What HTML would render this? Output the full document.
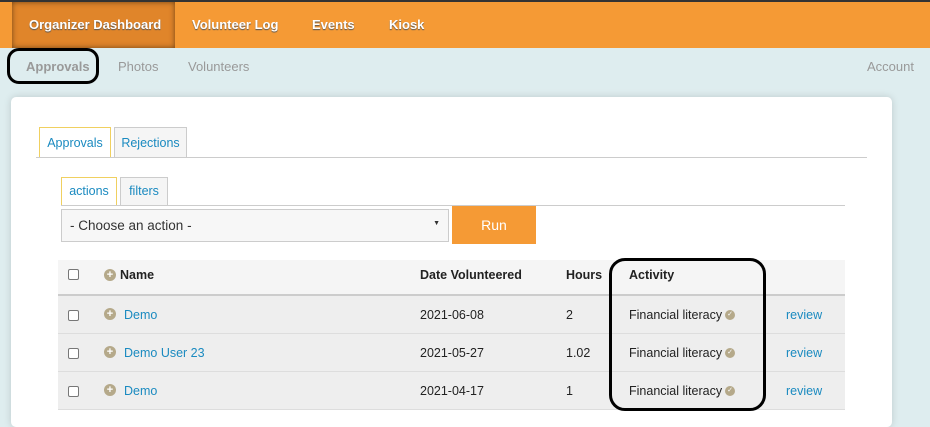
<!DOCTYPE html>
<html><head><style>
*{box-sizing:border-box;margin:0;padding:0}
body{width:930px;height:412px;overflow:hidden;background:#deedef;font-family:"Liberation Sans",sans-serif;position:relative}
.top{position:absolute;left:0;top:0;width:930px;height:48px;background:#f59a35;border-top:2px solid #333}
.top span{position:absolute;top:15px;color:#fff;font-weight:bold;font-size:13px;text-shadow:0 1px 1px #555}
.act{position:absolute;left:12px;top:0;width:163px;height:46px;background:#e0852a;box-shadow:inset 0 0 6px rgba(0,0,0,.5)}
.sub{position:absolute;top:59px;color:#999;font-size:13px}
.card{position:absolute;left:11px;top:97px;width:881px;height:330px;background:#fff;border-radius:5px;box-shadow:0 0 8px rgba(0,0,0,.15)}
.tab{position:absolute;border:1px solid #ccc;border-bottom:none;background:#f5f5f5;color:#1a8ac0;font-size:12.5px;text-align:center}
.tab.a{border-color:#f0d060;background:#fff}
.line{position:absolute;height:1px;background:#ccc}
.sel{position:absolute;left:61px;top:209px;width:388px;height:33px;border:1px solid #ccc;background:#f7f7f7;font-size:13.5px;color:#333;padding:8px 0 0 8px}
.run{position:absolute;left:452px;top:206px;width:84px;height:38px;background:#f59a35;color:#fff;font-size:14px;text-align:center;line-height:38px}
.row{position:absolute;left:58px;width:787px;height:38px;background:#eee;border-bottom:1px solid #ddd;font-size:12.5px;color:#222}
.row span{position:absolute;top:12px}
.cb{position:absolute;left:10px;top:14px;width:11px;height:11px;border:1px solid #777;border-radius:2px;background:#fff}
.pl{position:absolute;left:46px;top:12px;width:12px;height:12px;border-radius:50%;background:#b5a98a;color:#fff;font-size:11px;line-height:12px;text-align:center;font-weight:bold}
.ck{display:inline-block;width:10px;height:10px;border-radius:50%;background:#b5a98a;vertical-align:middle;margin:-2px 0 0 3px;color:#fff;font-size:7px;line-height:10px;text-align:center;font-style:normal;overflow:hidden}
.l{color:#1a8ac0}
.box{position:absolute;border:3px solid #000;border-radius:12px}
</style></head><body>
<div class="top"><div class="act"></div>
<span style="left:29px">Organizer Dashboard</span><span style="left:192px">Volunteer Log</span><span style="left:312px">Events</span><span style="left:389px">Kiosk</span></div>
<div class="sub" style="left:26px;font-weight:bold">Approvals</div>
<div class="sub" style="left:118px">Photos</div>
<div class="sub" style="left:188px">Volunteers</div>
<div class="sub" style="left:867px">Account</div>
<div class="box" style="left:7px;top:48px;width:92px;height:36px"></div>
<div class="card"></div>
<div class="tab a" style="left:39px;top:127px;width:72px;height:31px;line-height:30px">Approvals</div>
<div class="tab" style="left:114px;top:127px;width:73px;height:30px;line-height:30px">Rejections</div>
<div class="line" style="left:36px;top:157px;width:831px"></div>
<div class="tab a" style="left:61px;top:177px;width:56px;height:29px;line-height:27px">actions</div>
<div class="tab" style="left:120px;top:177px;width:48px;height:28px;line-height:27px">filters</div>
<div class="line" style="left:61px;top:205px;width:784px"></div>
<div class="sel">- Choose an action -<span style="position:absolute;right:8px;top:10px;font-size:7px">▼</span></div>
<div class="run">Run</div>
<div class="row" style="top:260px;height:36px;background:#f5f5f5;border-bottom:2px solid #ccc;font-weight:bold">
<div class="cb" style="top:9px"></div><div class="pl" style="top:9px">+</div>
<span style="left:62px;top:8px">Name</span><span style="left:362px;top:8px">Date Volunteered</span><span style="left:508px;top:8px">Hours</span><span style="left:571px;top:8px">Activity</span></div>
<div class="row" style="top:296px"><div class="cb"></div><div class="pl">+</div><span class="l" style="left:66px">Demo</span><span style="left:362px">2021-06-08</span><span style="left:508px">2</span><span style="left:571px">Financial literacy<i class="ck">✓</i></span><span class="l" style="left:728px">review</span></div>
<div class="row" style="top:334px"><div class="cb"></div><div class="pl">+</div><span class="l" style="left:66px">Demo User 23</span><span style="left:362px">2021-05-27</span><span style="left:508px">1.02</span><span style="left:571px">Financial literacy<i class="ck">✓</i></span><span class="l" style="left:728px">review</span></div>
<div class="row" style="top:372px"><div class="cb"></div><div class="pl">+</div><span class="l" style="left:66px">Demo</span><span style="left:362px">2021-04-17</span><span style="left:508px">1</span><span style="left:571px">Financial literacy<i class="ck">✓</i></span><span class="l" style="left:728px">review</span></div>
<div class="box" style="left:609px;top:258px;width:157px;height:153px;border-radius:16px"></div>
</body></html>
